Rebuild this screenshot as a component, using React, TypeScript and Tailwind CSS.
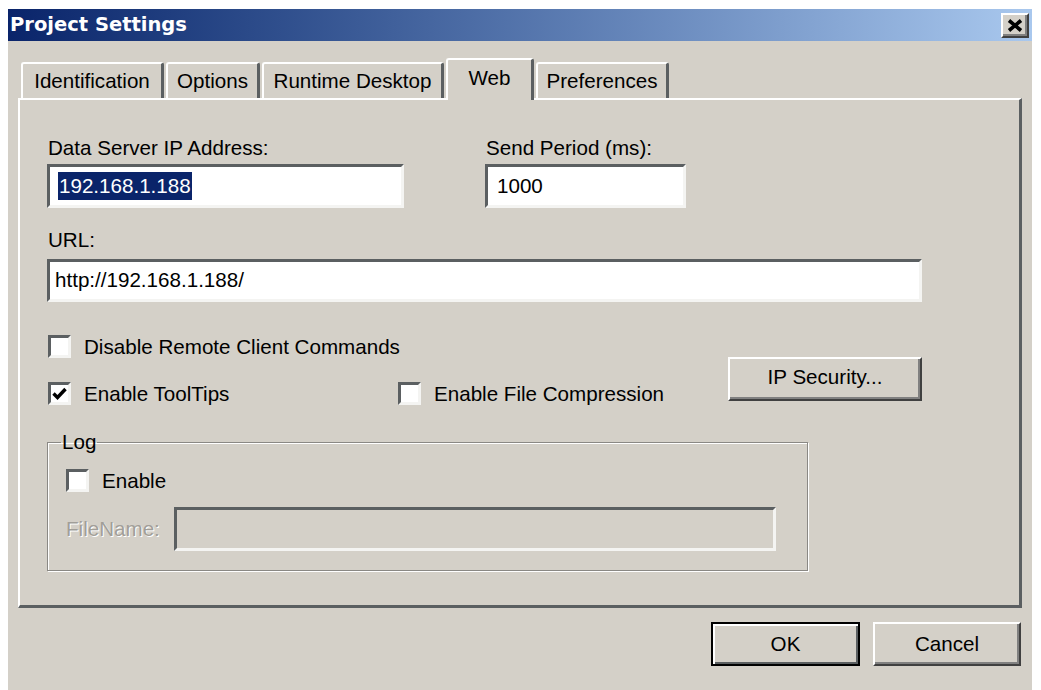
import type { ReactNode } from 'react';

const sunken =
  'border-[3px] border-t-[#5b5f61] border-l-[#5b5f61] border-b-[#f4f4f2] border-r-[#f4f4f2]';
const raised =
  'border-2 border-t-white border-l-white border-b-[#404040] border-r-[#404040] shadow-[inset_-2px_-2px_0_#808080]';

function Field({ className = '', children }: { className?: string; children?: ReactNode }) {
  return <div className={`flex items-center ${sunken} ${className}`}>{children}</div>;
}

function CheckBox({ checked = false, label }: { checked?: boolean; label: string }) {
  return (
    <div className="flex items-center gap-[13px] h-[23px]">
      <div className={`w-[23px] h-[23px] bg-white flex items-center justify-center ${sunken}`}>
        {checked && (
          <svg width="15" height="13" viewBox="0 0 15 13">
            <path d="M1.5 6.5 L5.5 10.5 L13.5 2" fill="none" stroke="#000" strokeWidth="3.4" />
          </svg>
        )}
      </div>
      <span className="leading-6">{label}</span>
    </div>
  );
}

function Tab({ label, width, active = false }: { label: string; width: string; active?: boolean }) {
  if (active) {
    return (
      <div
        className={`${width} h-[42px] relative z-10 bg-[#d4d0c8] rounded-t-[3px] border-t-2 border-l-2 border-r-[3px] border-t-white border-l-white border-r-[#5b5f61] flex justify-center pt-[6px]`}
      >
        <span className="leading-6">{label}</span>
      </div>
    );
  }
  return (
    <div
      className={`${width} h-[36px] mb-[2px] rounded-t-[3px] border-t-2 border-l-2 border-r-[3px] border-t-white border-l-white border-r-[#5b5f61] flex items-center justify-center`}
    >
      <span className="leading-6">{label}</span>
    </div>
  );
}

export default function App() {
  return (
    <div
      className="w-[1041px] h-[690px] bg-white pt-[9px] pl-[8px] overflow-hidden text-black text-[20.6px]"
      style={{ fontFamily: '"Liberation Sans", Arial, sans-serif' }}
    >
      <div className="w-[1024px] h-[681px] bg-[#d4d0c8] flex flex-col">
        {/* Title bar */}
        <div className="h-[32px] shrink-0 flex items-center justify-between bg-gradient-to-r from-[#0a246a] to-[#a9c8ee] pl-[2px] pr-[3px]">
          <span
            className="text-white font-bold text-[19.5px] leading-none"
            style={{ fontFamily: '"DejaVu Sans", Verdana, sans-serif' }}
          >
            Project Settings
          </span>
          <div className={`w-[28px] h-[25px] bg-[#d4d0c8] flex items-center justify-center ${raised}`}>
            <svg width="16" height="13" viewBox="0 0 16 13">
              <path d="M2 1.5 L14 11.5 M14 1.5 L2 11.5" stroke="#000" strokeWidth="3.6" />
            </svg>
          </div>
        </div>

        {/* Tabs */}
        <div className="flex items-end gap-[2px] mt-[17px] ml-[13px] -mb-[2px]">
          <Tab label="Identification" width="w-[143px]" />
          <Tab label="Options" width="w-[94px]" />
          <Tab label="Runtime Desktop" width="w-[182px]" />
          <Tab label="Web" width="w-[88px]" active />
          <Tab label="Preferences" width="w-[133px]" />
        </div>

        {/* Tab panel */}
        <div className="mx-[10px] h-[510px] shrink-0 border-2 border-t-white border-l-white border-r-[3px] border-b-[3px] border-r-[#5b5f61] border-b-[#5b5f61] pt-[36px] pl-[27px] flex flex-col">
          <div className="flex gap-[81px]">
            <div className="flex flex-col w-[357px]">
              <span className="leading-6 pl-[1px]">Data Server IP Address:</span>
              <Field className="mt-1 h-[44px] bg-white pl-[8px]">
                <span className="bg-[#0a246a] text-white leading-[28px] px-[1px]">192.168.1.188</span>
              </Field>
            </div>
            <div className="flex flex-col w-[201px]">
              <span className="leading-6 pl-[1px]">Send Period (ms):</span>
              <Field className="mt-1 h-[44px] bg-white pl-[9px]">1000</Field>
            </div>
          </div>

          <span className="leading-6 mt-[20px] pl-[1px]">URL:</span>
          <Field className="mt-[7px] h-[43px] w-[875px] bg-white pl-[5px]">http://192.168.1.188/</Field>

          <div className="flex mt-[33px] pl-[1px]">
            <div className="flex flex-col gap-[24px] w-[680px]">
              <CheckBox label="Disable Remote Client Commands" />
              <div className="flex">
                <div className="w-[350px]">
                  <CheckBox checked label="Enable ToolTips" />
                </div>
                <CheckBox label="Enable File Compression" />
              </div>
            </div>
            <div
              className={`mt-[22px] w-[194px] h-[44px] flex items-center justify-center pb-[4px] ${raised}`}
            >
              IP Security...
            </div>
          </div>

          {/* Log group */}
          <fieldset className="mt-[25px] w-[761px] h-[141px] border border-[#8a8884] shadow-[1px_1px_0_#fff,inset_1px_1px_0_#fff] pl-[18px]">
            <legend className="leading-6 -ml-[5px] px-[1px]">Log</legend>
            <div className="mt-[15px]">
              <CheckBox label="Enable" />
            </div>
            <div className="flex items-center mt-[15px]">
              <span className="w-[108px] text-[#a19e98] text-[20.6px] leading-6 [text-shadow:1px_1px_0_#fff]">
                FileName:
              </span>
              <Field className="w-[602px] h-[44px]" />
            </div>
          </fieldset>
        </div>

        {/* Bottom buttons */}
        <div className="flex justify-end gap-[13px] mt-[14px] mr-[11px]">
          <div className="w-[149px] h-[44px] border-2 border-black shadow-[inset_2px_2px_0_#fff,inset_-2px_-2px_0_#5b5f61] flex items-center justify-center">
            OK
          </div>
          <div className={`w-[148px] h-[44px] flex items-center justify-center ${raised}`}>Cancel</div>
        </div>
      </div>
    </div>
  );
}
